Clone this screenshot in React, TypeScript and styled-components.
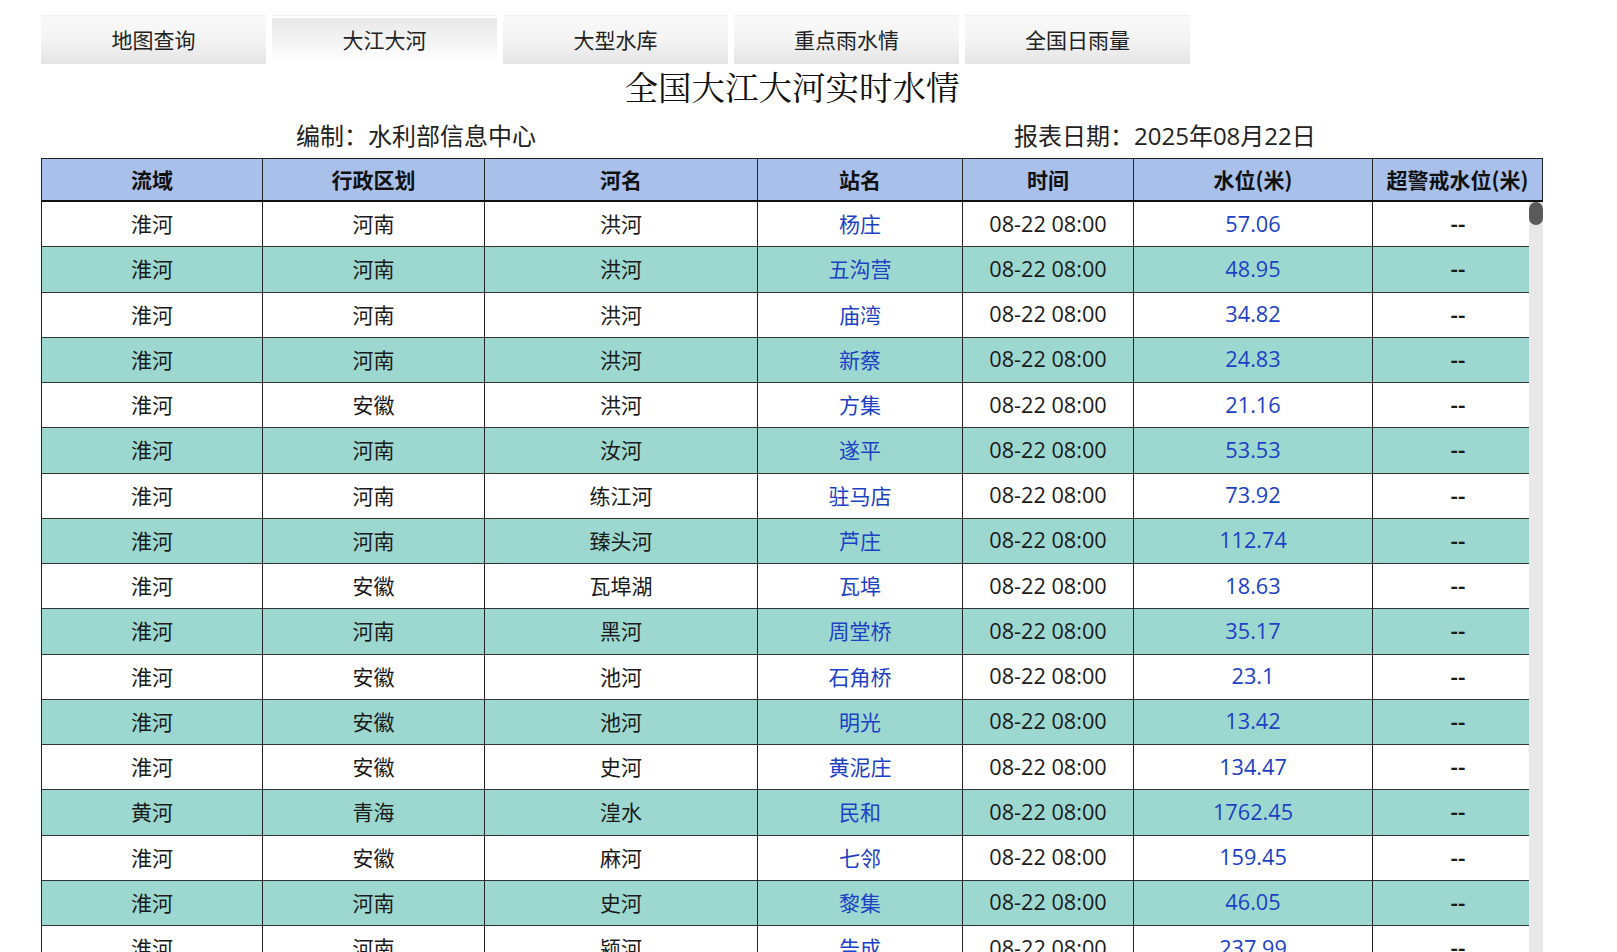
import React from "react";
import styled, { createGlobalStyle } from "styled-components";

const CJK = `"Noto Sans CJK SC", "Noto Sans", sans-serif`;
const LATIN = `"Open Sans", "Noto Sans CJK SC", sans-serif`;
const COLUMNS = "221px 222px 273px 205px 171px 239px 1fr";

const Global = createGlobalStyle`
  html, body { margin: 0; padding: 0; background: #fff; height: 100%; overflow: hidden; }
  body { font-family: ${CJK}; color: #111; }
`;

const Page = styled.div`
  box-sizing: border-box;
  width: 1617px;
  height: 952px;
  padding: 15px 74px 0 41px;
  display: flex;
  flex-direction: column;
  overflow: hidden;
`;

const TabBar = styled.nav`
  display: flex;
  gap: 6px;
`;

const Tab = styled.div<{ $active?: boolean }>`
  width: 225px;
  height: 49px;
  padding-bottom: 2px;
  display: flex;
  align-items: center;
  justify-content: center;
  font-size: 21px;
  color: #222;
  box-sizing: border-box;
  background: ${(p) =>
    p.$active
      ? "linear-gradient(180deg, #efefef 0 1px, #fff 1px 3px, #e8e8e8 3px, #f4f4f4 55%, #ffffff 100%)"
      : "linear-gradient(180deg, #efefef 0 1px, #f9f9f9 1px, #f4f4f4 50%, #e4e4e4 100%)"};
`;

const Title = styled.h1`
  margin: 0;
  height: 48px;
  padding-bottom: 4px;
  box-sizing: border-box;
  font-family: "Noto Serif CJK SC", ${CJK};
  font-size: 33.5px;
  line-height: 44px;
  font-weight: 400;
  text-align: center;
  color: #111;
`;

const Meta = styled.div`
  height: 46px;
  padding-bottom: 2px;
  box-sizing: border-box;
  display: flex;
  align-items: center;
  font-family: ${LATIN};
  font-size: 24px;
  color: #222;
`;

const MetaLeft = styled.span`
  margin-left: 255px;
  width: 718px;
`;

const Header = styled.div`
  display: grid;
  grid-template-columns: ${COLUMNS};
  height: 44px;
  box-sizing: border-box;
  background: #a9c0ea;
  border: 1px solid #222;
  border-bottom: 2px solid #111;
`;

const HeadCell = styled.div`
  display: flex;
  align-items: center;
  justify-content: center;
  padding-bottom: 2px;
  font-size: 21px;
  font-weight: 700;
  border-right: 1px solid #222;
  &:last-child { border-right: none; }
`;

const BodyWrap = styled.div`
  position: relative;
  flex: 1;
  min-height: 0;
  overflow: hidden;
`;

const Row = styled.div<{ $odd: boolean }>`
  display: grid;
  grid-template-columns: ${COLUMNS};
  height: 45.25px;
  box-sizing: border-box;
  background: ${(p) => (p.$odd ? "#9dd8d0" : "#fff")};
  border-left: 1px solid #222;
  border-bottom: 1px solid #333;
`;

const Cell = styled.div<{ $link?: boolean; $num?: boolean; $dash?: boolean }>`
  display: flex;
  align-items: center;
  justify-content: center;
  padding-bottom: 2px;
  font-family: ${(p) => (p.$num || p.$dash ? LATIN : CJK)};
  font-size: ${(p) => (p.$dash ? "23px" : p.$num ? "21.7px" : "21px")};
  font-weight: ${(p) => (p.$dash ? 600 : 400)};
  color: ${(p) => (p.$link ? "#1c41c4" : "#1a1a1a")};
  border-right: 1px solid #222;
  &:last-child { border-right: none; }
`;

const Track = styled.div`
  position: absolute;
  top: 0;
  right: 0;
  bottom: 0;
  width: 14px;
  background: #e8e8e8;
`;

const Thumb = styled.div`
  height: 23px;
  background: #5a5a5a;
  border-radius: 7px;
`;

const HEAD = ["流域", "行政区划", "河名", "站名", "时间", "水位(米)", "超警戒水位(米)"];

const DATA: [string, string, string, string, string][] = [
  ["淮河", "河南", "洪河", "杨庄", "57.06"],
  ["淮河", "河南", "洪河", "五沟营", "48.95"],
  ["淮河", "河南", "洪河", "庙湾", "34.82"],
  ["淮河", "河南", "洪河", "新蔡", "24.83"],
  ["淮河", "安徽", "洪河", "方集", "21.16"],
  ["淮河", "河南", "汝河", "遂平", "53.53"],
  ["淮河", "河南", "练江河", "驻马店", "73.92"],
  ["淮河", "河南", "臻头河", "芦庄", "112.74"],
  ["淮河", "安徽", "瓦埠湖", "瓦埠", "18.63"],
  ["淮河", "河南", "黑河", "周堂桥", "35.17"],
  ["淮河", "安徽", "池河", "石角桥", "23.1"],
  ["淮河", "安徽", "池河", "明光", "13.42"],
  ["淮河", "安徽", "史河", "黄泥庄", "134.47"],
  ["黄河", "青海", "湟水", "民和", "1762.45"],
  ["淮河", "安徽", "麻河", "七邻", "159.45"],
  ["淮河", "河南", "史河", "黎集", "46.05"],
  ["淮河", "河南", "颍河", "告成", "237.99"],
];

const TABS = ["地图查询", "大江大河", "大型水库", "重点雨水情", "全国日雨量"];

export default function App() {
  return (
    <Page>
      <Global />
      <TabBar>
        {TABS.map((t, i) => (
          <Tab key={t} $active={i === 1}>{t}</Tab>
        ))}
      </TabBar>
      <Title>全国大江大河实时水情</Title>
      <Meta>
        <MetaLeft>编制：水利部信息中心</MetaLeft>
        <span>报表日期：2025年08月22日</span>
      </Meta>
      <Header>
        {HEAD.map((h) => (
          <HeadCell key={h}>{h}</HeadCell>
        ))}
      </Header>
      <BodyWrap>
        {DATA.map((d, i) => (
          <Row key={d[3]} $odd={i % 2 === 1}>
            <Cell>{d[0]}</Cell>
            <Cell>{d[1]}</Cell>
            <Cell>{d[2]}</Cell>
            <Cell $link>{d[3]}</Cell>
            <Cell $num>08-22 08:00</Cell>
            <Cell $link $num>{d[4]}</Cell>
            <Cell $dash>--</Cell>
          </Row>
        ))}
        <Track>
          <Thumb />
        </Track>
      </BodyWrap>
    </Page>
  );
}
